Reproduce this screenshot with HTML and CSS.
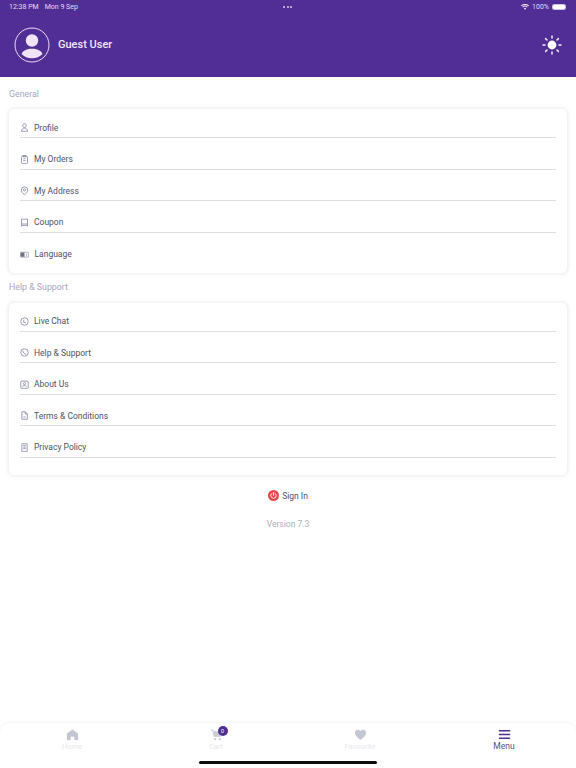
FILE: index.html
```html
<!DOCTYPE html>
<html lang="en">
<head>
<meta charset="utf-8">
<title>Menu</title>
<link rel="stylesheet" href="styles.css">
</head>
<body>
<div class="page">
  <header class="header">
    <div class="status">
      <div class="status-left"><span>12:38 PM</span><span>Mon 9 Sep</span></div>
      <div class="dots"><i></i><i></i><i></i></div>
      <div class="status-right">
        <svg class="wifi" viewBox="0 0 16 12"><path d="M8 11.5 5.6 8.9a3.4 3.4 0 0 1 4.8 0zM3.9 7.2 2.6 5.8a7.6 7.6 0 0 1 10.8 0l-1.3 1.4a5.8 5.8 0 0 0-8.2 0zM1.4 4.6 0 3.1a11.3 11.3 0 0 1 16 0l-1.4 1.5a9.4 9.4 0 0 0-13.2 0z" fill="#ece6f6"/></svg>
        <span>100%</span>
        <span class="battery"><span class="battery-fill"></span></span>
      </div>
    </div>
    <div class="user-bar">
      <div class="user">
        <svg class="avatar" viewBox="0 0 36 36"><circle cx="18" cy="18" r="17" fill="none" stroke="#eadff5" stroke-width="1"/><circle cx="18" cy="13.5" r="6.2" fill="#f1e3f8"/><path d="M7.5 27c1.6-3.6 5.6-5.2 10.5-5.2s8.9 1.600 10.500 5.200c-2.600 2.800-6.300 4.300-10.500 4.300s-7.900-1.500-10.500-4.300z" fill="#f1e3f8"/></svg>
        <span class="user-name">Guest User</span>
      </div>
      <svg class="sun" viewBox="0 0 20 20"><circle cx="10" cy="10" r="4.400" fill="#fff"/><g stroke="#f1ebf8" stroke-width="1.500" stroke-linecap="round"><path d="M10 1v2M10 17v2M1 10h2M17 10h2M3.600 3.600 5 5M15 15l1.400 1.400M3.600 16.400 5 15M15 5l1.400-1.400"/></g></svg>
    </div>
  </header>

  <main class="content">
    <h2 class="section-title">General</h2>
    <section class="card card-general">
      <div class="row"><svg class="icon" viewBox="0 0 12 12"><circle cx="6" cy="3.500" r="2.500"/><path d="M1.800 11c.3-2.700 2-4 4.200-4s3.900 1.300 4.200 4z"/></svg><span>Profile</span></div>
      <div class="row"><svg class="icon" viewBox="0 0 12 12"><rect x="2" y="1.500" width="8" height="10" rx="1.500"/><path d="M4 .8h4v1.500H4zM4.500 5h3M4.500 7.500h3"/></svg><span>My Orders</span></div>
      <div class="row"><svg class="icon" viewBox="0 0 12 12"><path d="M6 11.500C3 9.800 1.800 7.500 1.800 5.300a4.200 4.200 0 0 1 8.400 0c0 2.200-1.200 4.500-4.200 6.200z"/><circle cx="6" cy="5.200" r="1.500"/></svg><span>My Address</span></div>
      <div class="row"><svg class="icon" viewBox="0 0 12 12"><path d="M2 1.500h8v9.500l-1.300-1H3.300L2 11zM2 8h8"/></svg><span>Coupon</span></div>
      <div class="row"><svg class="icon" viewBox="0 0 14 12"><rect x=".5" y="2.500" width="13" height="7.500" rx="1.500"/><rect x="1" y="3" width="6" height="6.500" fill="#6e7587" stroke="none"/><path d="M10.300 4.500v3.500"/></svg><span class="lang">Language</span></div>
    </section>

    <h2 class="section-title">Help &amp; Support</h2>
    <section class="card card-help">
      <div class="row"><svg class="icon" viewBox="0 0 12 12"><circle cx="6" cy="6" r="5"/><path d="M5 3.500v3.800h2.800"/></svg><span>Live Chat</span></div>
      <div class="row"><svg class="icon" viewBox="0 0 12 12"><circle cx="6" cy="6" r="5"/><path d="M4 3.500c-.4 2.500 1.700 4.700 4.500 4.700"/></svg><span>Help &amp; Support</span></div>
      <div class="row"><svg class="icon" viewBox="0 0 12 12"><rect x="1" y="1.500" width="10" height="9.500" rx="1"/><circle cx="6" cy="4.800" r="1.400"/><path d="M3.500 9c.3-1.400 1.300-2 2.500-2s2.200.6 2.500 2"/></svg><span>About Us</span></div>
      <div class="row"><svg class="icon" viewBox="0 0 12 12"><path d="M2.500 1h4.500l2.800 3v7H2.500zM7 1v3h2.800M4.500 8h3"/></svg><span>Terms &amp; Conditions</span></div>
      <div class="row"><svg class="icon" viewBox="0 0 12 12"><path d="M2.500 1h7v10.500h-7zM4.300 3.500h3.400M4.300 5.500h3.400M4.300 7.500h3.400"/></svg><span>Privacy Policy</span></div>
    </section>

    <div class="sign-in">
      <svg class="power" viewBox="0 0 12 12"><circle cx="6" cy="6" r="6" fill="#e3474a"/><path d="M6 2.600v3.200M3.900 3.900a3 3 0 1 0 4.200 0" fill="none" stroke="#fff" stroke-width="1" stroke-linecap="round"/></svg>
      <span>Sign In</span>
    </div>
    <p class="version">Version 7.3</p>
  </main>

  <nav class="tabbar">
    <div class="tab">
      <svg class="tab-icon" viewBox="0 0 14 14"><path d="M7 1.500 13 6v7H9V9.500H5V13H1V6z" fill="#c3c5d2"/></svg>
      <span>Home</span>
    </div>
    <div class="tab">
      <span class="cart-wrap">
        <svg class="tab-icon" viewBox="0 0 14 14"><path d="M1 2h2l1.500 7h7L13 4H4" fill="#c9cbd6" stroke="#c9cbd6" stroke-width="1"/><circle cx="5.500" cy="12" r="1.200" fill="#c9cbd6"/><circle cx="10.500" cy="12" r="1.200" fill="#c9cbd6"/></svg>
        <span class="badge">0</span>
      </span>
      <span>Cart</span>
    </div>
    <div class="tab">
      <svg class="tab-icon" viewBox="0 0 14 14"><path d="M7 13C3 10 1 8 1 5.200 1 3.200 2.500 2 4.200 2 5.400 2 6.400 2.600 7 3.600 7.600 2.600 8.600 2 9.800 2 11.500 2 13 3.200 13 5.200 13 8 11 10 7 13z" fill="#c3c7d4"/></svg>
      <span>Favourite</span>
    </div>
    <div class="tab tab-active">
      <svg class="tab-icon" viewBox="0 0 14 14"><path d="M1.500 3h11M1.500 7h11M1.500 11h11" stroke="#4f2f94" stroke-width="1.600" stroke-linecap="round"/></svg>
      <span>Menu</span>
    </div>
  </nav>
  <div class="home-indicator"></div>
</div>
</body>
</html>
```
FILE: styles.css
```css
* { box-sizing: border-box; }
html, body { margin: 0; padding: 0; }
body { background: #fff; font-family: Roboto, "Noto Sans", "Liberation Sans", sans-serif; color: #4a5064; }
.page { position: relative; width: 576px; height: 768px; display: flex; flex-direction: column; overflow: hidden; background: #fff; }

.header { height: 77px; background: #512e95; color: #fff; flex: none; }
.status { height: 13px; display: flex; align-items: center; justify-content: space-between; padding: 0 10px 0 9px; font-size: 7px; color: #e4dcf2; }
.status-left { display: flex; gap: 6px; width: 120px; }
.dots { display: flex; gap: 1.500px; }
.dots i { width: 2px; height: 2px; border-radius: 50%; background: #d9cdec; display: block; }
.status-right { display: flex; gap: 3px; align-items: center; width: 120px; justify-content: flex-end; }
.wifi { width: 8px; height: 6px; }
.battery { width: 14px; height: 6px; border: 1px solid #cdbfe5; border-radius: 2px; display: block; }
.battery-fill { display: block; width: 100%; height: 100%; background: #fff; border-radius: 1px; }
.user-bar { display: flex; align-items: center; justify-content: space-between; padding: 0 14px; height: 62px; }
.user { display: flex; align-items: center; gap: 8px; }
.avatar { width: 36px; height: 36px; display: block; margin-top: 1px; }
.user-name { font-size: 11px; font-weight: 500; color: #f1e6f8; }
.sun { width: 20px; height: 20px; display: block; margin-top: 2px; }

.content { flex: 1; padding: 0 8px; }
.section-title { margin: 0; font-size: 8.800px; font-weight: 400; color: #a9a5c4; height: 31px; line-height: 14px; padding: 10px 0 0 1px; }
.card { border: 1px solid #f3f3f4; border-radius: 6px; box-shadow: 0 0 4px rgba(0,0,0,.08); padding: 0 11px; background: #fff; }
.card + .section-title { height: 28px; padding-top: 6px; }
.row { height: 31.500px; display: flex; align-items: flex-end; gap: 5px; font-size: 8.500px; line-height: 12px; color: #4c5264; border-bottom: 1px solid #dcdde0; padding-bottom: 3.500px; }
.row:first-child { height: 29px; }
.row span { display: block; }
.card-general { padding-bottom: 9.500px; }
.card-general .row:last-child { border-bottom: 0; height: 31px; }
.card-help { padding-bottom: 17px; }
.card-help .row:first-child { height: 28.500px; }
.icon { width: 9px; height: 9px; margin-bottom: 1.500px; fill: none; stroke: #7c8294; stroke-width: 1; flex: none; }
.lang { margin-left: .500px; }

.sign-in { display: flex; align-items: center; justify-content: center; gap: 3px; margin-top: 14px; font-size: 8.500px; color: #4c5264; height: 12px; }
.power { width: 11px; height: 11px; display: block; }
.version { margin: 16px 0 0; text-align: center; font-size: 8.500px; color: #a9afb8; line-height: 12px; }

.tabbar { flex: none; height: 45px; display: grid; grid-template-columns: repeat(4, 1fr); border-radius: 10px 10px 0 0; box-shadow: 0 -1px 3px rgba(0,0,0,.05); background: #fff; }
.tab { display: flex; flex-direction: column; align-items: center; padding-top: 5px; font-size: 7.500px; color: #e5e6ec; line-height: 9px; }
.tab-icon { width: 13px; height: 13px; display: block; margin-bottom: 1px; }
.tab-active { color: #55507f; font-size: 8.500px; }
.cart-wrap { position: relative; display: block; }
.badge { position: absolute; top: -2px; left: 8px; width: 10px; height: 10px; border-radius: 50%; background: #4f2f94; color: #eee; font-size: 6px; line-height: 10px; text-align: center; }
.home-indicator { position: absolute; left: 199px; bottom: 4px; width: 178px; height: 3px; border-radius: 2px; background: #0b0b0b; }
```
